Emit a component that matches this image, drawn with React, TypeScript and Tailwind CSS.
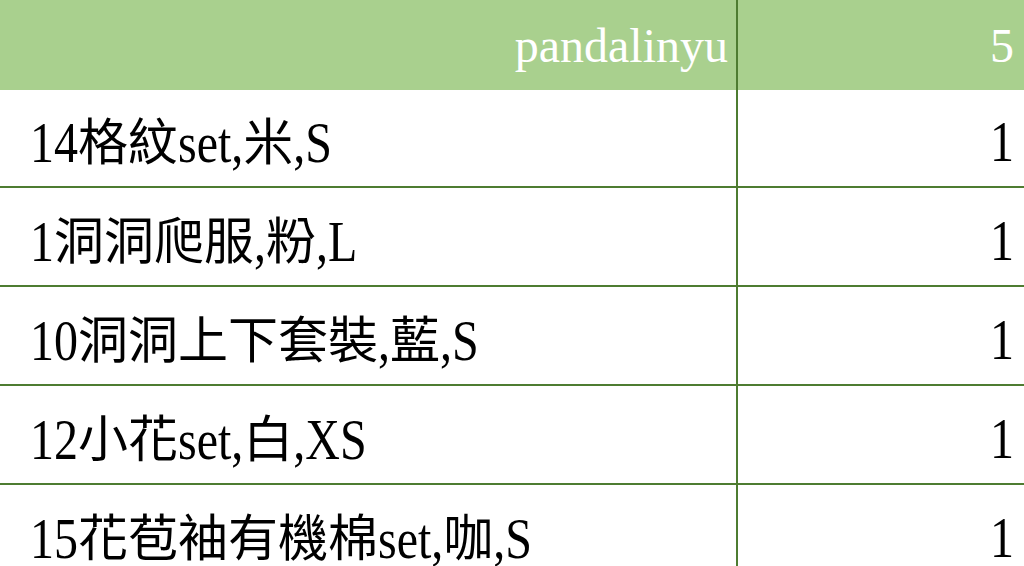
import React from "react";

const rows = [
  { name: "14格紋set,米,S", qty: "1" },
  { name: "1洞洞爬服,粉,L", qty: "1" },
  { name: "10洞洞上下套裝,藍,S", qty: "1" },
  { name: "12小花set,白,XS", qty: "1" },
  { name: "15花苞袖有機棉set,咖,S", qty: "1" },
];

const serif = { fontFamily: '"Liberation Serif", "Times New Roman", serif' };
const cjk = {
  fontFamily: '"Liberation Serif", "Noto Sans CJK TC", "Noto Sans CJK SC", serif',
};

function Mixed({ text }: { text: string }) {
  const parts = text.split(/([\u3400-\u9fff]+)/).filter((p) => p.length > 0);
  return (
    <>
      {parts.map((p, i) =>
        /[\u3400-\u9fff]/.test(p) ? (
          <span key={i} className="text-[50px] leading-none" style={cjk}>
            {p}
          </span>
        ) : (
          <span
            key={i}
            className="inline-block text-[48px] leading-none scale-y-[1.2] origin-[50%_40px] translate-y-[2px] whitespace-pre"
            style={serif}
          >
            {p}
          </span>
        )
      )}
    </>
  );
}

export default function App() {
  return (
    <div className="w-[1024px] h-[566px] overflow-hidden bg-white text-black" style={serif}>
      <div className="flex h-[90px] bg-[#a9d08e] text-white text-[48px] leading-none">
        <div className="w-[738px] border-r-2 border-[#4e7c31] flex items-center justify-end pr-[8px] pt-[2px]">
          pandalinyu
        </div>
        <div className="flex-1 flex items-center justify-end pr-[10px] pt-[2px]">5</div>
      </div>
      {rows.map((r, i) => (
        <div
          key={i}
          className={`flex border-b-2 border-[#4e7c31] ${i === 0 ? "h-[98px]" : "h-[99px]"}`}
        >
          <div className="w-[738px] border-r-2 border-[#4e7c31] flex items-center pl-[30px] pt-[10px]">
            <div className="leading-none whitespace-nowrap">
              <Mixed text={r.name} />
            </div>
          </div>
          <div className="flex-1 flex items-center justify-end pr-[10px] pt-[10px]">
            <div className="leading-none">
              <Mixed text={r.qty} />
            </div>
          </div>
        </div>
      ))}
    </div>
  );
}
